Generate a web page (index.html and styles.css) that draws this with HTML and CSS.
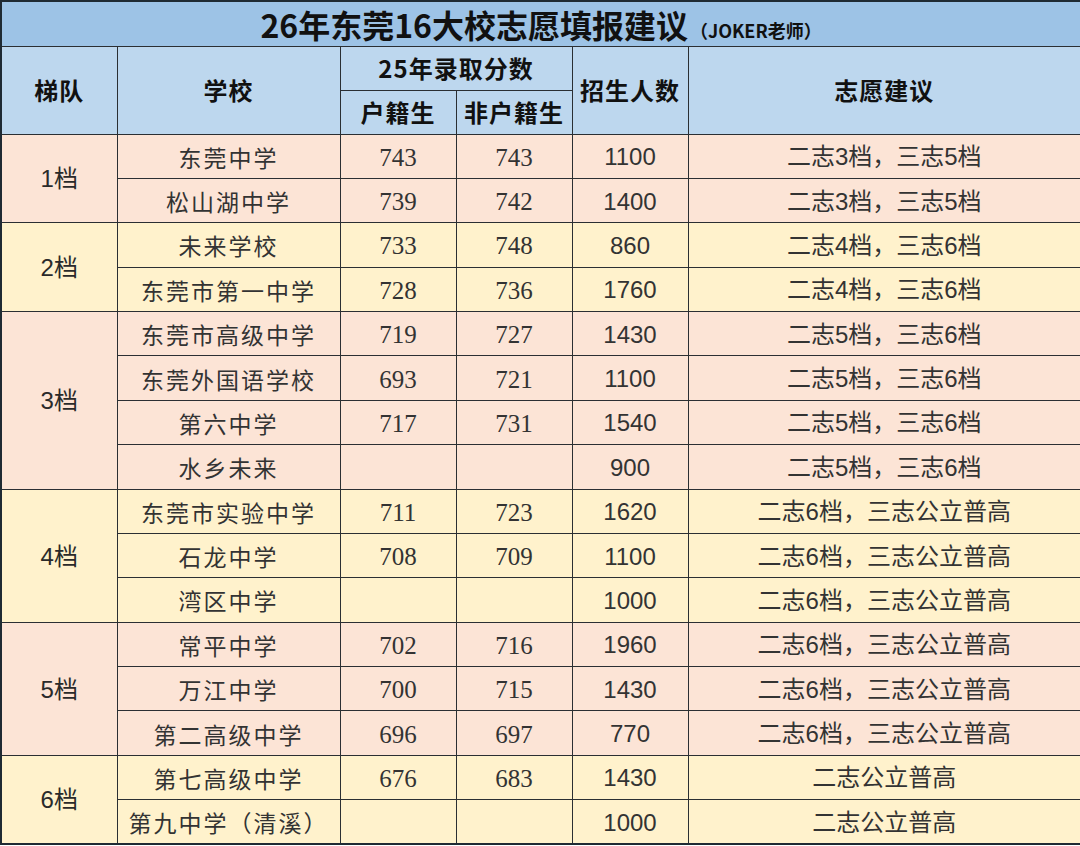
FILE: index.html
```html
<!DOCTYPE html>
<html lang="zh">
<head>
<meta charset="utf-8">
<title>26年东莞16大校志愿填报建议</title>
<link rel="stylesheet" href="styles.css">
</head>
<body>
<table class="sheet">
  <colgroup>
    <col class="c-tier"><col class="c-school"><col class="c-num"><col class="c-num"><col class="c-num"><col class="c-adv">
  </colgroup>
  <thead>
    <tr class="r-title">
      <th colspan="6" class="title"><span class="title-main">26年东莞16大校志愿填报建议</span><span class="title-sub">（JOKER老师）</span></th>
    </tr>
    <tr class="r-head">
      <th rowspan="2" class="head">梯队</th>
      <th rowspan="2" class="head">学校</th>
      <th colspan="2" class="head">25年录取分数</th>
      <th rowspan="2" class="head">招生人数</th>
      <th rowspan="2" class="head">志愿建议</th>
    </tr>
    <tr class="r-head">
      <th class="head">户籍生</th>
      <th class="head">非户籍生</th>
    </tr>
  </thead>
  <tbody class="pink">
    <tr><td rowspan="2" class="tier">1档</td><td class="school">东莞中学</td><td class="score">743</td><td class="score">743</td><td class="count">1100</td><td class="adv">二志3档，三志5档</td></tr>
    <tr><td class="school">松山湖中学</td><td class="score">739</td><td class="score">742</td><td class="count">1400</td><td class="adv">二志3档，三志5档</td></tr>
  </tbody>
  <tbody class="cream">
    <tr><td rowspan="2" class="tier">2档</td><td class="school">未来学校</td><td class="score">733</td><td class="score">748</td><td class="count">860</td><td class="adv">二志4档，三志6档</td></tr>
    <tr><td class="school">东莞市第一中学</td><td class="score">728</td><td class="score">736</td><td class="count">1760</td><td class="adv">二志4档，三志6档</td></tr>
  </tbody>
  <tbody class="pink">
    <tr><td rowspan="4" class="tier">3档</td><td class="school">东莞市高级中学</td><td class="score">719</td><td class="score">727</td><td class="count">1430</td><td class="adv">二志5档，三志6档</td></tr>
    <tr><td class="school">东莞外国语学校</td><td class="score">693</td><td class="score">721</td><td class="count">1100</td><td class="adv">二志5档，三志6档</td></tr>
    <tr><td class="school">第六中学</td><td class="score">717</td><td class="score">731</td><td class="count">1540</td><td class="adv">二志5档，三志6档</td></tr>
    <tr><td class="school">水乡未来</td><td class="score"></td><td class="score"></td><td class="count">900</td><td class="adv">二志5档，三志6档</td></tr>
  </tbody>
  <tbody class="cream">
    <tr><td rowspan="3" class="tier">4档</td><td class="school">东莞市实验中学</td><td class="score">711</td><td class="score">723</td><td class="count">1620</td><td class="adv">二志6档，三志公立普高</td></tr>
    <tr><td class="school">石龙中学</td><td class="score">708</td><td class="score">709</td><td class="count">1100</td><td class="adv">二志6档，三志公立普高</td></tr>
    <tr><td class="school">湾区中学</td><td class="score"></td><td class="score"></td><td class="count">1000</td><td class="adv">二志6档，三志公立普高</td></tr>
  </tbody>
  <tbody class="pink">
    <tr><td rowspan="3" class="tier">5档</td><td class="school">常平中学</td><td class="score">702</td><td class="score">716</td><td class="count">1960</td><td class="adv">二志6档，三志公立普高</td></tr>
    <tr><td class="school">万江中学</td><td class="score">700</td><td class="score">715</td><td class="count">1430</td><td class="adv">二志6档，三志公立普高</td></tr>
    <tr><td class="school">第二高级中学</td><td class="score">696</td><td class="score">697</td><td class="count">770</td><td class="adv">二志6档，三志公立普高</td></tr>
  </tbody>
  <tbody class="cream">
    <tr><td rowspan="2" class="tier">6档</td><td class="school">第七高级中学</td><td class="score">676</td><td class="score">683</td><td class="count">1430</td><td class="adv">二志公立普高</td></tr>
    <tr><td class="school">第九中学（清溪）</td><td class="score"></td><td class="score"></td><td class="count">1000</td><td class="adv">二志公立普高</td></tr>
  </tbody>
</table>
</body>
</html>
```

FILE: styles.css
```css
html, body {
  margin: 0;
  padding: 0;
  background: #ffffff;
}

.sheet {
  width: 1080px;
  height: 845px;
  border-collapse: collapse;
  table-layout: fixed;
  border: 2px solid #1f2a33;
  font-family: "Noto Sans CJK SC", "Liberation Sans", sans-serif;
  color: #2a2a2a;
}

.c-tier { width: 116px; }
.c-school { width: 223px; }
.c-num { width: 116px; }
.c-adv { width: 393px; }

.sheet th,
.sheet td {
  border: 1px solid #2b2f33;
  padding: 0;
  text-align: center;
  vertical-align: middle;
  white-space: nowrap;
  line-height: 1;
}

.sheet tbody td {
  padding-top: 2px;
}

.r-title { height: 45px; }
.r-head { height: 44px; }
.sheet tbody tr { height: 44.3px; }

.title {
  background: #9dc3e6;
  color: #111;
}

.title-main {
  font-size: 32px;
  font-weight: 700;
}

.title-sub {
  font-size: 18px;
  font-weight: 700;
  margin-left: 2px;
}

.head {
  background: #bdd7ee;
  color: #111;
  font-size: 24px;
  font-weight: 700;
  letter-spacing: 1px;
}

.pink td { background: #fce4d6; }
.cream td { background: #fff2cc; }

.tier {
  font-family: "Liberation Sans", "Noto Sans CJK SC", sans-serif;
  font-size: 24px;
}

.school {
  font-family: "Noto Sans CJK SC", serif;
  font-size: 23px;
  font-weight: 400;
  letter-spacing: 2px;
  color: #333;
}

.score {
  font-family: "Liberation Serif", serif;
  font-size: 25px;
  color: #333;
}

.count {
  font-family: "Liberation Sans", sans-serif;
  font-size: 24px;
  color: #333;
}

.adv {
  font-family: "Liberation Sans", "Noto Sans CJK SC", sans-serif;
  font-size: 24px;
  color: #333;
}
```
